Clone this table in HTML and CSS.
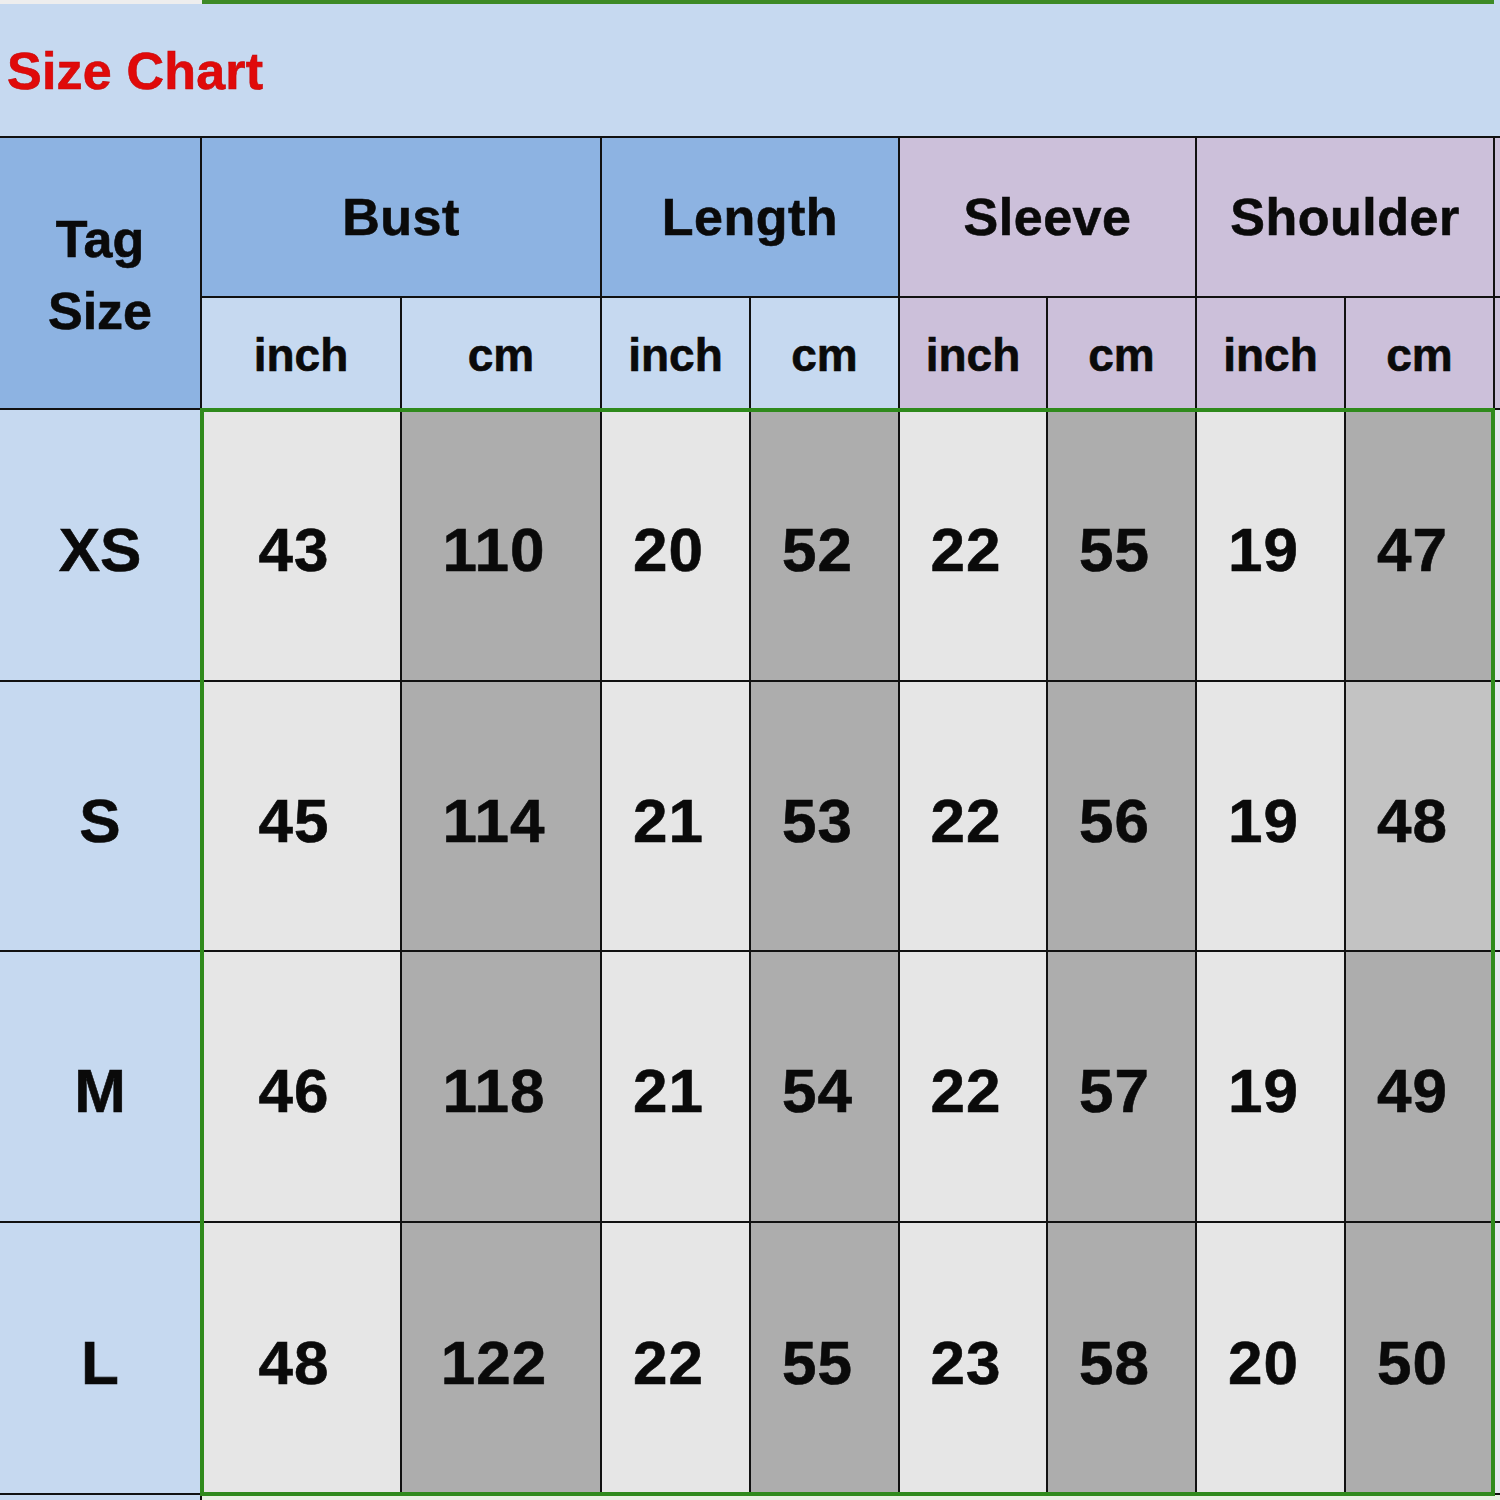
FILE: index.html
```html
<!DOCTYPE html>
<html>
<head>
<meta charset="utf-8">
<link rel="stylesheet" href="styles.css">
</head>
<body>
<div class="page">
  <div class="topstrip"><div class="strip-gray"></div><div class="strip-green"></div></div>
  <div class="title">Size Chart</div>
  <div class="chart">
    <div class="c tag">Tag<br>Size</div>
    <div class="c blue big span2">Bust</div>
    <div class="c blue big span2">Length</div>
    <div class="c lilac big span2">Sleeve</div>
    <div class="c lilac big span2">Shoulder</div>
    <div class="c lilac edge"></div>

    <div class="c lightblue sub">inch</div>
    <div class="c lightblue sub">cm</div>
    <div class="c lightblue sub">inch</div>
    <div class="c lightblue sub">cm</div>
    <div class="c lilac sub">inch</div>
    <div class="c lilac sub">cm</div>
    <div class="c lilac sub">inch</div>
    <div class="c lilac sub">cm</div>
    <div class="c lilac edge"></div>

    <div class="c size">XS</div>
    <div class="c num light">43</div><div class="c num dark">110</div>
    <div class="c num light">20</div><div class="c num dark">52</div>
    <div class="c num light">22</div><div class="c num dark">55</div>
    <div class="c num light">19</div><div class="c num dark">47</div>
    <div class="c edge pale"></div>

    <div class="c size">S</div>
    <div class="c num light">45</div><div class="c num dark">114</div>
    <div class="c num light">21</div><div class="c num dark">53</div>
    <div class="c num light">22</div><div class="c num dark">56</div>
    <div class="c num light">19</div><div class="c num mid">48</div>
    <div class="c edge pale"></div>

    <div class="c size">M</div>
    <div class="c num light">46</div><div class="c num dark">118</div>
    <div class="c num light">21</div><div class="c num dark">54</div>
    <div class="c num light">22</div><div class="c num dark">57</div>
    <div class="c num light">19</div><div class="c num dark">49</div>
    <div class="c edge pale"></div>

    <div class="c size">L</div>
    <div class="c num light">48</div><div class="c num dark">122</div>
    <div class="c num light">22</div><div class="c num dark">55</div>
    <div class="c num light">23</div><div class="c num dark">58</div>
    <div class="c num light">20</div><div class="c num dark">50</div>
    <div class="c edge pale"></div>

    <div class="c lightblue foot"></div>
    <div class="c foot span-rest"></div>

    <div class="frame"></div>
  </div>
</div>
</body>
</html>
```

FILE: styles.css
```css
html, body {
  margin: 0;
  padding: 0;
  background: #ffffff;
}

.page {
  width: 1500px;
  height: 1500px;
  overflow: hidden;
  display: flex;
  flex-direction: column;
  font-family: "Liberation Sans", Arial, sans-serif;
  font-weight: bold;
  color: #0a0a0a;
  -webkit-text-stroke: 0.6px #0a0a0a;
}

.topstrip {
  flex-shrink: 0;
  display: flex;
  height: 5px;
  background: #c6d9f0;
}

.strip-gray {
  width: 202px;
  height: 4px;
  background: #eeeeee;
}

.strip-green {
  width: 1292px;
  height: 4px;
  background: #3d8a26;
}

.title {
  flex-shrink: 0;
  height: 131px;
  background: #c6d9f0;
  color: #e00a0a;
  -webkit-text-stroke: 0.6px #c40808;
  font-size: 52px;
  display: flex;
  align-items: center;
  padding-left: 7px;
  border-bottom: 2px solid #111;
  letter-spacing: 0.2px;
}

.chart {
  flex-shrink: 0;
  position: relative;
  display: grid;
  grid-template-columns: 200px 198px 198px 147px 147px 146px 147px 147px 147px 5px;
  grid-template-rows: 158px 110px 270px 268px 269px 270px 5px;
  gap: 2px;
  background: #111;
}

.c {
  display: flex;
  align-items: center;
  justify-content: center;
  text-align: center;
}

.tag {
  grid-row: span 2;
  background: #8db3e2;
  font-size: 52px;
  line-height: 72px;
  padding-top: 4px;
}

.blue { background: #8db3e2; }
.lilac { background: #ccc0da; }
.lightblue { background: #c6d9f0; }

.big {
  font-size: 52px;
  letter-spacing: 0.5px;
}

.span2 { grid-column: span 2; }

.sub {
  font-size: 46px;
  padding-top: 4px;
}

.size {
  background: #c6d9f0;
  font-size: 62px;
  padding-top: 8px;
}

.num {
  font-size: 62px;
  padding-top: 8px;
  padding-right: 14px;
  letter-spacing: 1px;
}

.light { background: #e6e6e6; }
.dark { background: #adadad; }
.mid { background: #c3c3c3; }

.pale { background: #e3e8ee; }

.span-rest { grid-column: 2 / 11; background: #e8f0e4; }

.frame {
  position: absolute;
  grid-column: 2 / 10;
  grid-row: 3 / 7;
  top: -2px;
  left: -2px;
  right: -2px;
  bottom: -3px;
  border: 4px solid #2f8a1c;
  pointer-events: none;
}
```
